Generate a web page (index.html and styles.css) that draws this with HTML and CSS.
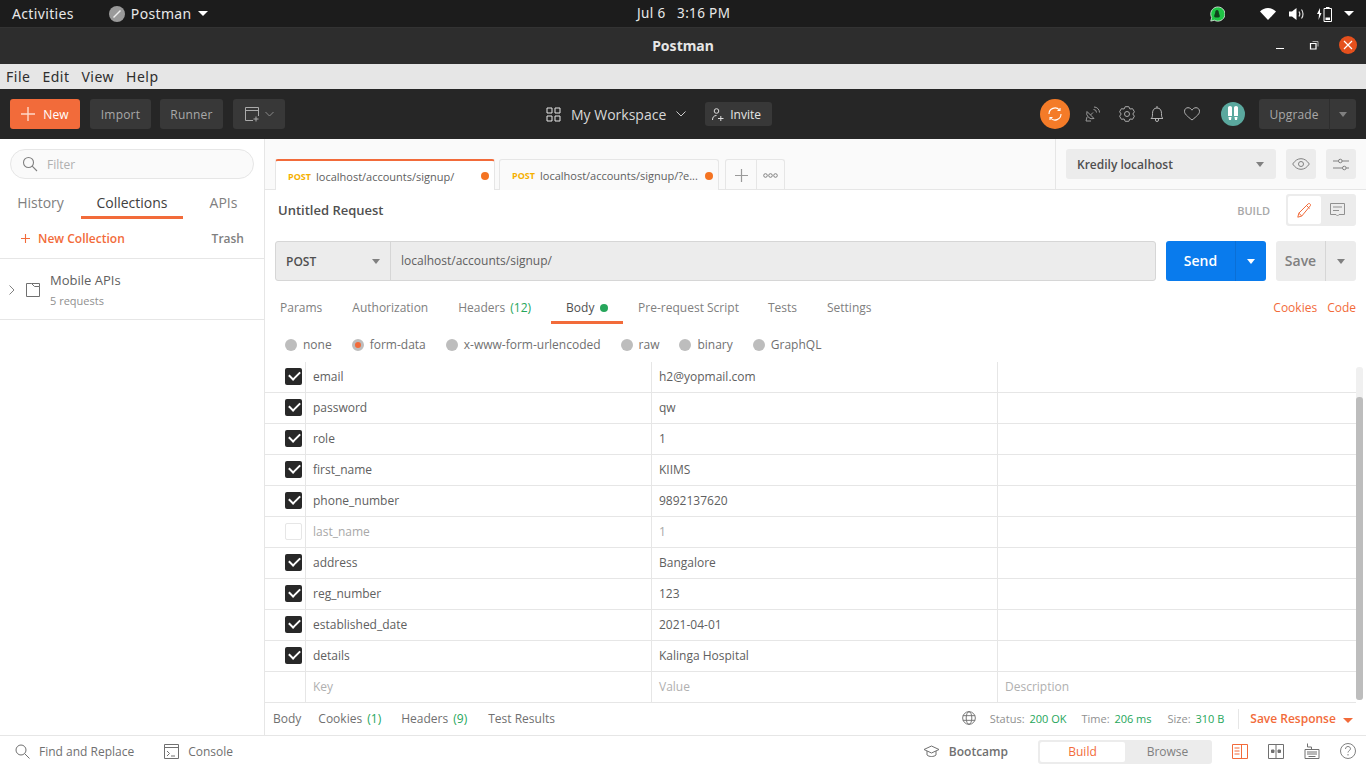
FILE: index.html
```html
<!DOCTYPE html>
<html lang="en">
<head>
    <meta charset="UTF-8">
    <title>Postman</title>
    <link rel="stylesheet" href="styles.css">
</head>
<body>
    <!-- desktop top bar -->
    <div class="topbar">
        <span class="activities">Activities</span>
        <span class="app-menu">
            <svg width="16" height="16" viewBox="0 0 16 16"><circle cx="8" cy="8" r="8" fill="#9a9a9a"/><path d="M4.500 11.500 11.500 4.500" stroke="#eee" stroke-width="1.500"/></svg>
            Postman
            <i class="caret white"></i>
        </span>
        <span class="clock">Jul 6 &nbsp; 3:16 PM</span>
        <span class="tray">
            <svg class="tray-app" width="16" height="16" viewBox="0 0 18 18"><path d="M2 17l1-4a8 8 0 1 1 3 3z" fill="#1fc445" stroke="#fff" stroke-width=".8"/><path d="M9 4.500c-1.400 0-2 1.200-2 2.500 0 1.300-1.200 3-1.200 4.500 0 1 1 1.500 3.200 1.500s3.200-.5 3.200-1.500c0-1.500-1.200-3.200-1.200-4.500 0-1.300-.6-2.500-2-2.500z" fill="#10401c"/></svg>
            <svg class="tray-wifi" width="16" height="12" viewBox="0 0 16 12"><path d="M0 3.500C2 1.500 5 0 8 0s6 1.500 8 3.500L8 12z" fill="#fff"/></svg>
            <svg class="tray-sound" width="16" height="14" viewBox="0 0 16 14"><path d="M0 4.500h3L7.500 1v12L3 9.500H0z" fill="#fff"/><path d="M10 4.500c1 1.500 1 3.500 0 5M12.500 2.500c2 2.500 2 6.500 0 9" fill="none" stroke="#ddd" stroke-width="1.200"/></svg>
            <svg class="tray-batt" width="16" height="16" viewBox="0 0 16 16"><path d="M3 2 0 8h2v0L1.500 14 4.500 7H3z" fill="#fff"/><path d="M7 2.500h7.500v13H7z" fill="none" stroke="#fff"/><path d="M9 1h3.500v1.500H9z" fill="#fff"/><path d="M8.500 11.500h4.500v2.500H8.500z" fill="#fff"/></svg>
            <i class="caret white"></i>
        </span>
    </div>

    <!-- window title -->
    <div class="titlebar">
        <span class="title">Postman</span>
        <span class="win-btns">
            <svg width="10" height="10" viewBox="0 0 10 10"><path d="M1 8.500h8" stroke="#fff"/></svg>
            <svg width="10" height="10" viewBox="0 0 10 10"><path d="M1.500 3.500h5.500v5.500H1.500z" fill="none" stroke="#fff" stroke-width="1.200"/><path d="M3.500 1.500h5.500v5" fill="none" stroke="#aaa"/></svg>
            <span class="win-close"><svg width="10" height="10" viewBox="0 0 10 10"><path d="M1 1l8 8M9 1l-8 8" stroke="#fff" stroke-width="1.200"/></svg></span>
        </span>
    </div>

    <div class="menubar">
        <span>File</span><span>Edit</span><span>View</span><span>Help</span>
    </div>

    <!-- main toolbar -->
    <div class="toolbar">
        <div class="tool-left">
            <button class="btn-new"><svg width="14" height="14" viewBox="0 0 14 14"><path d="M7 0v14M0 7h14" stroke="#ffd9c9" stroke-width="1.400"/></svg>New</button>
            <button class="btn-dark btn-import">Import</button>
            <button class="btn-dark btn-runner">Runner</button>
            <button class="btn-dark btn-window">
                <svg width="16" height="16" viewBox="0 0 16 16" fill="none" stroke="#aaa"><path d="M9 14.500H1.500v-13h13V10M1.500 4.500h13M12 10.500v5M9.500 13h5"/></svg>
                <svg width="9" height="6" viewBox="0 0 9 6" fill="none" stroke="#888"><path d="M.5 1l4 4 4-4"/></svg>
            </button>
        </div>
        <div class="tool-center">
            <span class="workspace">
                <svg width="15" height="15" viewBox="0 0 15 15" fill="none" stroke="#e6e6e6"><path d="M1 1h5v5H1zM9 1h5v5H9zM1 9h5v5H1zM9 9h5v5H9z"/></svg>
                My Workspace
                <svg width="10" height="6" viewBox="0 0 10 6" fill="none" stroke="#ccc"><path d="M.5 .5 5 5 9.500 .5"/></svg>
            </span>
            <button class="btn-invite">
                <svg width="12" height="13" viewBox="0 0 12 13" fill="none" stroke="#ddd"><circle cx="4.500" cy="3" r="2.300"/><path d="M.5 12c0-3 1.500-4.500 4-4.500M6 10.500h5.500M8.800 8v5"/></svg>
                Invite
            </button>
        </div>
        <div class="tool-right">
            <span class="sync"><svg width="16" height="14" viewBox="0 0 16 14" fill="none" stroke="#fff" stroke-width="1.100"><path d="M2 7a6 6 0 0 1 10.500-4M14 7a6 6 0 0 1-10.500 4"/><path d="M10.500 3.500h2.500V1M5.500 10.500H3V13" /></svg></span>
            <svg class="ic-sat" width="16" height="16" viewBox="0 0 16 16" fill="none" stroke="#9a9a9a"><path d="M3 5.500a5.500 5.500 0 0 0 7 7L3 5.500zM6.500 9 9 6.500M9.500 3.500a3 3 0 0 1 3 3M10 1a5.500 5.500 0 0 1 5.500 5.500M3 11l-1 4h5"/></svg>
            <svg class="ic-gear" width="16" height="16" viewBox="0 0 16 16" fill="none" stroke="#aaa" stroke-linejoin="round"><circle cx="8" cy="8" r="2.500"/><path d="M6.200 .7h3.600l1.100 2.300 2.700-.3 1.800 3.100L13.800 8l1.600 2.200-1.800 3.100-2.700-.3-1.100 2.300H6.200L5.100 13l-2.700.3L.6 10.200 2.200 8 .6 5.800l1.800-3.100 2.700.3z"/></svg>
            <svg class="ic-bell" width="14" height="16" viewBox="0 0 14 16" fill="none" stroke="#b5b5b5"><path d="M1 12.500c1.500-1 1.500-2.500 1.500-5C2.500 4 4 2 7 2s4.500 2 4.500 5.500c0 2.500 0 4 1.500 5zM5.500 12.500v1.500a1.500 1.500 0 0 0 3 0v-1.500M7 0v2"/></svg>
            <svg class="ic-heart" width="16" height="14" viewBox="0 0 16 14" fill="none" stroke="#b5b5b5"><path d="M8 13C3 9 .5 7 .5 4.300 .5 2 2.200 .7 4 .7 5.800 .7 7 1.700 8 3.200 9 1.700 10.200 .7 12 .7c1.800 0 3.500 1.300 3.500 3.600C15.500 7 13 9 8 13z"/></svg>
            <span class="avatar"><svg width="12" height="16" viewBox="0 0 12 16" fill="#fff"><path d="M1 1.500Q1 0 3 0t2 1.500V10H1zM7 1.500Q7 0 9 0t2 1.500V10H7zM1.500 11H4.500L4 14H2zM7.500 11H10.500L10 14H8z"/></svg></span>
            <span class="upgrade"><span class="up-label">Upgrade</span><span class="up-arrow"><i class="caret gray"></i></span></span>
        </div>
    </div>

    <div class="app">
        <aside class="sidebar">
            <div class="filter-wrap">
                <div class="filter">
                    <svg width="16" height="16" viewBox="0 0 16 16" fill="none" stroke="#808080" stroke-width="1.100"><circle cx="6.500" cy="6.500" r="5"/><path d="M10.200 10.200 15 15"/></svg>
                    <span>Filter</span>
                </div>
            </div>
            <div class="side-tabs">
                <span class="side-tab t-hist">History</span>
                <span class="side-tab t-coll active">Collections</span>
                <span class="side-tab t-apis">APIs</span>
            </div>
            <div class="side-actions">
                <span class="new-coll"><svg width="9" height="9" viewBox="0 0 9 9"><path d="M4.500 0v9M0 4.500h9" stroke="#f26b3a" stroke-width="1.100"/></svg>New Collection</span>
                <span class="trash">Trash</span>
            </div>
            <div class="coll-row">
                <svg class="chev" width="6" height="10" viewBox="0 0 6 10" fill="none" stroke="#808080"><path d="M.5 .5 5 5 .5 9.500"/></svg>
                <svg class="folder" width="14" height="14" viewBox="0 0 14 14" fill="none" stroke="#707070"><path d="M.5 .5h5l3 3h5v10H.5zM5.500 .5h8v3"/></svg>
                <div>
                    <div class="coll-name">Mobile APIs</div>
                    <div class="coll-count">5 requests</div>
                </div>
            </div>
        </aside>

        <main class="content">
            <div class="tabbar">
                <div class="tabs">
                    <div class="tab active"><span class="method">POST</span><span class="tab-url">localhost/accounts/signup/</span><i class="dot"></i></div>
                    <div class="tab"><span class="method">POST</span><span class="tab-url">localhost/accounts/signup/?e...</span><i class="dot"></i></div>
                    <div class="tab-tools">
                        <span class="tab-plus"><svg width="13" height="13" viewBox="0 0 13 13"><path d="M6.500 0v13M0 6.500h13" stroke="#9a9a9a" stroke-width="1.200"/></svg></span>
                        <span class="tab-more"><svg width="15" height="5" viewBox="0 0 15 5" fill="none" stroke="#808080"><circle cx="2.500" cy="2.500" r="1.800"/><circle cx="7.500" cy="2.500" r="1.800"/><circle cx="12.500" cy="2.500" r="1.800"/></svg></span>
                    </div>
                </div>
                <div class="env">
                    <div class="env-select"><span>Kredily localhost</span><i class="caret gray"></i></div>
                    <span class="env-btn"><svg width="18" height="12" viewBox="0 0 18 12" fill="none" stroke="#808080"><path d="M.7 6C3 2.500 5.800 .7 9 .7s6 1.800 8.300 5.300C15 9.500 12.200 11.300 9 11.300S3 9.500 .7 6z"/><circle cx="9" cy="6" r="2.500"/></svg></span>
                    <span class="env-btn"><svg width="16" height="13" viewBox="0 0 16 13" fill="none" stroke="#808080"><path d="M0 3h5.500M9 3h7M0 10h9.500M13 10h3"/><circle cx="7.300" cy="3" r="1.800"/><circle cx="11.300" cy="10" r="1.800"/></svg></span>
                </div>
            </div>

            <div class="req-head">
                <span class="req-title">Untitled Request</span>
                <span class="build-label">BUILD</span>
                <div class="mode-toggle">
                    <span class="mode on"><svg width="15" height="15" viewBox="0 0 15 15" fill="none" stroke="#f26b3a"><path d="M.8 14.200l1-4L11 1c.7-.7 1.500-.7 2.100 0s.7 1.400 0 2L4.800 13zM9.500 2.500l3 3M1.800 10.200l3 2.800"/></svg></span>
                    <span class="mode"><svg width="15" height="15" viewBox="0 0 15 15" fill="none" stroke="#909090"><path d="M.5 .5h14v11H9L7.500 13 6 11.500H.5zM3 4h9M3 7.500h6"/></svg></span>
                </div>
            </div>

            <div class="url-row">
                <div class="url-box">
                    <div class="url-method"><span>POST</span><i class="caret gray"></i></div>
                    <div class="url-input">localhost/accounts/signup/</div>
                </div>
                <div class="send"><span class="send-label">Send</span><span class="send-arrow"><i class="caret white"></i></span></div>
                <div class="save"><span class="save-label">Save</span><span class="save-arrow"><i class="caret gray"></i></span></div>
            </div>

            <div class="req-tabs">
                <span class="req-tab">Params</span>
                <span class="req-tab">Authorization</span>
                <span class="req-tab rt-headers">Headers <em>(12)</em></span>
                <span class="req-tab active">Body <i class="green-dot"></i></span>
                <span class="req-tab rt-pre">Pre-request Script</span>
                <span class="req-tab">Tests</span>
                <span class="req-tab">Settings</span>
                <span class="req-links"><span>Cookies</span><span>Code</span></span>
            </div>

            <div class="body-types">
                <span class="radio"><i></i>none</span>
                <span class="radio on"><i></i>form-data</span>
                <span class="radio"><i></i>x-www-form-urlencoded</span>
                <span class="radio"><i></i>raw</span>
                <span class="radio"><i></i>binary</span>
                <span class="radio"><i></i>GraphQL</span>
            </div>

            <div class="table-wrap">
                <div class="kv-table">
                    <div class="kv-row"><span class="c-check"><i class="check"></i></span><span>email</span><span>h2@yopmail.com</span><span></span></div>
                    <div class="kv-row"><span class="c-check"><i class="check"></i></span><span>password</span><span>qw</span><span></span></div>
                    <div class="kv-row"><span class="c-check"><i class="check"></i></span><span>role</span><span>1</span><span></span></div>
                    <div class="kv-row"><span class="c-check"><i class="check"></i></span><span>first_name</span><span>KIIMS</span><span></span></div>
                    <div class="kv-row"><span class="c-check"><i class="check"></i></span><span>phone_number</span><span>9892137620</span><span></span></div>
                    <div class="kv-row off"><span class="c-check"><i class="check empty"></i></span><span>last_name</span><span>1</span><span></span></div>
                    <div class="kv-row"><span class="c-check"><i class="check"></i></span><span>address</span><span>Bangalore</span><span></span></div>
                    <div class="kv-row"><span class="c-check"><i class="check"></i></span><span>reg_number</span><span>123</span><span></span></div>
                    <div class="kv-row"><span class="c-check"><i class="check"></i></span><span>established_date</span><span>2021-04-01</span><span></span></div>
                    <div class="kv-row"><span class="c-check"><i class="check"></i></span><span>details</span><span>Kalinga Hospital</span><span></span></div>
                    <div class="kv-row ghost"><span class="c-check"></span><span>Key</span><span>Value</span><span>Description</span></div>
                </div>
                <div class="scroll-track"><div class="scroll-thumb"></div></div>
            </div>

            <div class="res-bar">
                <span class="res-tab rs-body">Body</span>
                <span class="res-tab">Cookies <em>(1)</em></span>
                <span class="res-tab">Headers <em>(9)</em></span>
                <span class="res-tab rs-test">Test Results</span>
                <span class="res-meta">
                    <svg width="14" height="14" viewBox="0 0 15 15" fill="none" stroke="#707070"><circle cx="7.500" cy="7.500" r="6.800"/><ellipse cx="7.500" cy="7.500" rx="3" ry="6.800"/><path d="M1 5h13M1 10h13"/></svg>
                    <span class="stat s-status">Status: <b>200 OK</b></span>
                    <span class="stat s-time">Time: <b>206 ms</b></span>
                    <span class="stat s-size">Size: <b>310 B</b></span>
                    <span class="save-res">Save Response <i class="caret orange"></i></span>
                </span>
            </div>
        </main>
    </div>

    <footer class="statusbar">
        <span class="st-item st-find"><svg width="15" height="15" viewBox="0 0 15 15" fill="none" stroke="#707070"><circle cx="6" cy="6" r="5"/><path d="M9.700 9.700 14.500 14.500"/></svg>Find and Replace</span>
        <span class="st-item st-console"><svg width="15" height="15" viewBox="0 0 15 15" fill="none" stroke="#707070"><path d="M.5 .5h14v14H.5zM.5 3.500h14M3 7l2.500 2.500L3 12M7 12h4"/></svg>Console</span>
        <span class="st-item st-boot"><svg width="17" height="13" viewBox="0 0 17 13" fill="none" stroke="#707070"><path d="M8.500 1 16 4.500 8.500 8 1 4.500zM4 6v4c2 2 7 2 9 0V6"/></svg>Bootcamp</span>
        <div class="bb-toggle"><span class="bb on">Build</span><span class="bb">Browse</span></div>
        <span class="st-icons">
            <svg width="16" height="15" viewBox="0 0 16 15" fill="none" stroke="#f26b3a"><path d="M.5 .5h15v14H.5zM9.500 .5v14M2.500 4h5M2.500 7h5M2.500 10h5"/></svg>
            <svg width="16" height="15" viewBox="0 0 16 15" fill="none" stroke="#707070"><path d="M.5 .5h15v14H.5zM8 .5v14"/><path d="M3.500 6h2.500v2.500H3.500zM10 6h2.500v2.500H10z" fill="#707070"/></svg>
            <svg width="16" height="16" viewBox="0 0 15 16" fill="none" stroke="#707070"><path d="M.5 6.500h14v9H.5zM3 .5V4h4v2.500M2.500 9h10M2.500 11h10M4 13.500h7"/></svg>
            <svg width="16" height="16" viewBox="0 0 16 16" fill="none" stroke="#808080"><circle cx="8" cy="8" r="7.500"/><path d="M5.500 6c0-1.500 1-2.500 2.500-2.500s2.500 1 2.500 2.300c0 1.700-2.500 2-2.500 3.700M8 11v1.500"/></svg>
        </span>
    </footer>
</body>
</html>
```

FILE: styles.css
```css
* {
    box-sizing: border-box;
}

html, body {
    margin: 0;
    height: 768px;
    overflow: hidden;
}

body {
    font-family: 'Open Sans', 'Noto Sans', sans-serif;
    font-size: 12px;
    color: #505050;
    background: #fff;
    display: flex;
    flex-direction: column;
}

button {
    font-family: inherit;
    border: none;
}

em {
    font-style: normal;
    color: #26a65b;
    margin-left: 2px;
}

.caret {
    display: inline-block;
    width: 0;
    height: 0;
    border-left: 4px solid transparent;
    border-right: 4px solid transparent;
    border-top: 5px solid #808080;
}

.caret.white { border-top-color: #fff; }
.caret.orange { border-top-color: #f26b3a; border-left-width: 5px; border-right-width: 5px; }

/* top bar */
.topbar {
    height: 27px;
    flex: none;
    background: #1c1c1c;
    color: #e8e8e8;
    font-family: 'Noto Sans', sans-serif;
    font-size: 14px;
    letter-spacing: .35px;
    display: flex;
    align-items: center;
    padding-left: 12px;
    position: relative;
}

.topbar .caret {
    border-left-width: 5px;
    border-right-width: 5px;
}

.app-menu {
    margin-left: 35px;
    display: flex;
    align-items: center;
    gap: 6px;
}

.clock {
    position: absolute;
    left: 637px;
    top: 4px;
    font-size: 13.5px;
}

.tray {
    margin-left: auto;
    display: flex;
    align-items: center;
    padding-right: 12px;
}

.tray-app { margin-right: 35px; }
.tray-wifi { margin-right: 13px; }
.tray-sound { margin-right: 12px; }
.tray-batt { margin-right: 11px; }

/* window title */
.titlebar {
    height: 37px;
    flex: none;
    background: #2d2d2d;
    border-top: 1px solid #333;
    position: relative;
    text-align: center;
    color: #e6e6e6;
    font-family: 'Noto Sans', sans-serif;
    font-weight: 700;
    font-size: 14px;
    line-height: 36px;
}

.win-btns {
    position: absolute;
    right: 9px;
    top: 8px;
    display: flex;
    align-items: center;
    gap: 24px;
}

.win-close {
    width: 18px;
    height: 18px;
    margin-left: -4px;
    border-radius: 50%;
    background: #e5501d;
    display: flex;
    align-items: center;
    justify-content: center;
}

.menubar {
    height: 25px;
    flex: none;
    background: #e6e6e6;
    color: #2e2e2e;
    font-family: 'Noto Sans', sans-serif;
    font-size: 14px;
    letter-spacing: .5px;
    display: flex;
    align-items: center;
    gap: 12px;
    padding-left: 6px;
}

/* toolbar */
.toolbar {
    height: 50px;
    flex: none;
    background: #262626;
    display: flex;
    align-items: center;
    padding: 0 10px;
    position: relative;
}

.tool-left {
    display: flex;
    gap: 10px;
}

.tool-left button {
    height: 30px;
    border-radius: 3px;
    font-size: 12px;
    letter-spacing: .2px;
    display: flex;
    align-items: center;
    justify-content: center;
}

.btn-new {
    width: 70px;
    background: #f26b3a;
    color: #fff;
    gap: 8px;
}

.btn-dark {
    padding: 0;
    background: #383838;
    color: #a8a8a8;
}

.btn-import { width: 61px; margin-right: -1px; }
.btn-runner { width: 63px; }

.btn-window {
    width: 52px;
    gap: 5px;
}

.tool-center {
    position: absolute;
    left: 546px;
    top: 13px;
    display: flex;
    align-items: center;
    gap: 19px;
}

.workspace {
    display: flex;
    align-items: center;
    gap: 10px;
    color: #d8d8d8;
    font-size: 14px;
}

.btn-invite {
    width: 67px;
    height: 24px;
    border-radius: 3px;
    background: #383838;
    color: #e6e6e6;
    font-size: 12px;
    font-weight: 500;
    display: flex;
    align-items: center;
    gap: 6px;
    padding: 0 0 0 7px;
}

.tool-right {
    margin-left: auto;
    display: flex;
    align-items: center;
}

.sync {
    width: 30px;
    height: 30px;
    border-radius: 50%;
    background: #f47b28;
    display: flex;
    align-items: center;
    justify-content: center;
    margin-right: 14px;
}

.ic-sat { margin-right: 19px; }
.ic-gear { margin-right: 15px; }
.ic-bell { margin-right: 20px; }
.ic-heart { margin-right: 21px; }

.avatar {
    width: 24px;
    height: 24px;
    border-radius: 50%;
    background: #5aa89e;
    display: flex;
    align-items: center;
    justify-content: center;
    margin-right: 14px;
}

.upgrade {
    width: 97px;
    height: 30px;
    background: #383838;
    border-radius: 3px;
    color: #a8a8a8;
    display: flex;
    align-items: center;
}

.up-label {
    width: 71px;
    text-align: center;
    border-right: 1px solid #2e2e2e;
    line-height: 30px;
    padding-top: 1px;
    letter-spacing: .1px;
}

.up-arrow {
    flex: 1;
    display: flex;
    justify-content: center;
}

/* main area */
.app {
    flex: 1;
    display: flex;
    min-height: 0;
}

.sidebar {
    width: 265px;
    flex: none;
    border-right: 1px solid #e6e6e6;
}

.filter-wrap {
    padding: 10px 10px 0;
}

.filter {
    height: 30px;
    border: 1px solid #e6e6e6;
    background: #fafafa;
    border-radius: 15px;
    display: flex;
    align-items: center;
    gap: 9px;
    padding-left: 11px;
    color: #b0b0b0;
}

.side-tabs {
    height: 40px;
    margin-top: 9px;
    display: flex;
    font-size: 14px;
    color: #808080;
}

.side-tab {
    height: 40px;
    padding-top: 5px;
    text-align: center;
}

.t-hist { width: 81px; }
.t-coll { width: 102px; color: #505050; }
.t-apis { width: 81px; }

.side-tab.active {
    border-bottom: 3px solid #f26b3a;
    height: 31px;
    padding-top: 5px;
    color: #404040;
}

.side-actions {
    height: 41px;
    display: flex;
    align-items: center;
    justify-content: space-between;
    padding: 0 20px 0 21px;
    border-bottom: 1px solid #e6e6e6;
    margin-top: -10px;
    font-weight: 600;
}

.new-coll {
    color: #f26b3a;
    display: flex;
    align-items: center;
    gap: 8px;
}

.trash {
    color: #808080;
}

.coll-row {
    height: 61px;
    border-bottom: 1px solid #e6e6e6;
    display: flex;
    align-items: center;
    padding: 1px 0 0 9px;
}

.chev { margin-right: 11px; }
.folder { margin-right: 10px; }

.coll-name {
    font-size: 13px;
    color: #606060;
    line-height: 18px;
}

.coll-count {
    font-size: 11px;
    color: #909090;
    margin-top: 4px;
}

.content {
    flex: 1;
    min-width: 0;
    display: flex;
    flex-direction: column;
}

.tabbar {
    height: 51px;
    flex: none;
    background: #fafafa;
    border-bottom: 1px solid #e6e6e6;
    display: flex;
    justify-content: space-between;
}

.tabs {
    display: flex;
    align-items: flex-end;
    padding-left: 10px;
    margin-bottom: -1px;
}

.tab {
    width: 220px;
    height: 31px;
    margin-right: 4px;
    background: #fafafa;
    border: 1px solid #e6e6e6;
    border-bottom: none;
    border-radius: 3px 3px 0 0;
    display: flex;
    align-items: center;
    padding: 1px 5px 0 12px;
    font-size: 11px;
    color: #606060;
    white-space: nowrap;
}

.tab.active {
    background: #fff;
    border-top: 2px solid #f26b3a;
}

.method {
    font-size: 9px;
    font-weight: 700;
    color: #f5b000;
    margin-right: 5px;
}

.dot {
    width: 8px;
    height: 8px;
    border-radius: 50%;
    background: #f47321;
    margin-left: auto;
}

.tab-tools {
    margin-left: 2px;
    height: 31px;
    display: flex;
    border: 1px solid #e6e6e6;
    border-bottom: none;
    border-radius: 3px 3px 0 0;
}

.tab-plus, .tab-more {
    width: 30px;
    display: flex;
    align-items: center;
    justify-content: center;
}

.tab-more {
    border-left: 1px solid #e6e6e6;
    width: 28px;
}

.env {
    width: 311px;
    border-left: 1px solid #e6e6e6;
    display: flex;
    padding: 10px 10px 0;
    gap: 10px;
}

.env-select {
    width: 210px;
    height: 30px;
    background: #ececec;
    border-radius: 3px;
    display: flex;
    align-items: center;
    justify-content: space-between;
    padding: 0 12px 0 11px;
    color: #505050;
    font-weight: 600;
}

.env-btn {
    width: 30px;
    height: 30px;
    background: #ececec;
    border-radius: 3px;
    display: flex;
    align-items: center;
    justify-content: center;
}

.req-head {
    height: 51px;
    flex: none;
    display: flex;
    align-items: flex-start;
    padding: 0 10px 0 13px;
}

.req-title {
    font-size: 13px;
    font-weight: 600;
    color: #505050;
    line-height: 40px;
}

.build-label {
    margin-left: auto;
    margin-right: 16px;
    font-size: 11px;
    font-weight: 600;
    color: #a8a8a8;
    line-height: 40px;
    margin-top: 1px;
}

.mode-toggle {
    width: 70px;
    height: 32px;
    background: #ececec;
    border-radius: 3px;
    padding: 2px;
    display: flex;
    margin-top: 4px;
}

.mode {
    flex: 1;
    display: flex;
    align-items: center;
    justify-content: center;
    border-radius: 2px;
}

.mode.on {
    background: #fff;
}

.url-row {
    height: 40px;
    flex: none;
    margin: 0 10px;
    display: flex;
}

.url-box {
    flex: 1;
    display: flex;
    border: 1px solid #d6d6d6;
    border-radius: 3px;
    background: #ececec;
}

.url-method {
    width: 115px;
    flex: none;
    border-right: 1px solid #d6d6d6;
    display: flex;
    align-items: center;
    justify-content: space-between;
    padding: 0 10px;
    font-weight: 600;
    color: #505050;
}

.url-input {
    flex: 1;
    padding-left: 10px;
    line-height: 38px;
    color: #606060;
}

.send, .save {
    margin-left: 10px;
    border-radius: 3px;
    display: flex;
    font-size: 14px;
    font-weight: 600;
    line-height: 40px;
    text-align: center;
}

.send {
    width: 100px;
    background: #097bed;
    color: #fff;
}

.send-label { width: 69px; }

.send-arrow, .save-arrow {
    flex: 1;
    display: flex;
    align-items: center;
    justify-content: center;
    border-left: 1px solid #0a6fd6;
}

.save {
    width: 80px;
    background: #ececec;
    color: #808080;
}

.save-label { width: 49px; }

.save-arrow {
    border-left-color: #d6d6d6;
}

.req-tabs {
    height: 33px;
    flex: none;
    margin-top: 10px;
    padding-left: 6px;
    padding-right: 10px;
    display: flex;
    color: #808080;
}

.req-tab {
    padding: 0 9px;
    margin-right: 12px;
    line-height: 34px;
    white-space: nowrap;
    height: 33px;
}

.rt-headers { margin-right: 11px; }
.rt-pre { margin-right: 11px; }

.req-tab.active {
    border-bottom: 3px solid #f26b3a;
    color: #505050;
    width: 72px;
    margin-right: 6px;
    padding-left: 15px;
}

.green-dot {
    display: inline-block;
    width: 8px;
    height: 8px;
    border-radius: 50%;
    background: #26a65b;
    margin-left: 2px;
}

.req-links {
    margin-left: auto;
    line-height: 34px;
    color: #f26b3a;
    display: flex;
    gap: 10px;
}

.body-types {
    height: 38px;
    flex: none;
    padding: 4px 0 1px 20px;
    display: flex;
    align-items: center;
    gap: 20px;
    color: #707070;
}

.radio {
    display: flex;
    align-items: center;
    gap: 6px;
}

.radio i {
    width: 12px;
    height: 12px;
    border-radius: 50%;
    background: #bdbdbd;
}

.radio.on i {
    background: #f26b3a;
    border: 3px solid #bdbdbd;
}

.table-wrap {
    flex: 1;
    min-height: 0;
    display: flex;
}

.kv-table {
    width: 1091px;
}

.kv-row {
    height: 31px;
    display: grid;
    grid-template-columns: 41px 346px 346px 358px;
    border-bottom: 1px solid #e6e6e6;
    line-height: 30px;
    color: #606060;
}

.kv-row > span {
    border-right: 1px solid #e6e6e6;
    padding-left: 7px;
}

.kv-row > span:last-child {
    border-right: none;
}

.kv-row.off { color: #a8a8a8; }
.kv-row.ghost { color: #b0b0b0; }

.kv-row > .c-check {
    padding: 6px 0 0 20px;
}

.check {
    display: block;
    width: 17px;
    height: 17px;
    border-radius: 2px;
    background: #282828;
    position: relative;
}

.check::after {
    content: "";
    position: absolute;
    left: 4px;
    top: 3px;
    width: 9px;
    height: 5px;
    border-left: 2px solid #fff;
    border-bottom: 2px solid #fff;
    transform: rotate(-45deg);
}

.check.empty {
    background: #fff;
    border: 1px solid #e6e6e6;
}

.check.empty::after {
    display: none;
}

.scroll-track {
    width: 7px;
    margin: 5px 0 3px;
    background: #f0f0f0;
    border-radius: 3px;
}

.scroll-thumb {
    width: 7px;
    background: #bdbdbd;
    border-radius: 3px;
    margin-top: 30px;
    height: 303px;
}

.res-bar {
    height: 32px;
    flex: none;
    display: flex;
    align-items: center;
    padding: 0 13px 2px 8px;
    color: #707070;
    gap: 20px;
}

.rs-body { margin-right: -3px; }
.rs-test { margin-left: 1px; }

.res-meta {
    margin-left: auto;
    display: flex;
    align-items: center;
    font-size: 11px;
    color: #909090;
}

.stat {
    margin-left: 14px;
}

.s-time { margin-left: 15px; }
.s-size { margin-left: 16px; }

.stat b {
    font-weight: 400;
    color: #26a65b;
    margin-left: 2px;
}

.save-res {
    margin: 2px 0 0 14px;
    padding-left: 11px;
    border-left: 1px solid #e6e6e6;
    color: #f26b3a;
    font-size: 12px;
    font-weight: 600;
    line-height: 20px;
}

.save-res .caret {
    margin-left: 4px;
}

/* bottom bar */
.statusbar {
    height: 33px;
    flex: none;
    border-top: 1px solid #e6e6e6;
    display: flex;
    align-items: center;
    padding: 0 0 2px 15px;
    color: #707070;
}

.st-item {
    display: flex;
    align-items: center;
    gap: 9px;
}

.st-find { margin-right: 30px; }
.st-console { margin-right: auto; }
.st-boot { margin-right: 30px; font-weight: 600; }

.bb-toggle {
    width: 174px;
    height: 24px;
    background: #ececec;
    border-radius: 3px;
    padding: 2px;
    display: flex;
    margin: 2px 20px 0 0;
}

.bb {
    flex: 1;
    text-align: center;
    line-height: 19px;
    color: #808080;
}

.bb.on {
    background: #fff;
    color: #f26b3a;
    border-radius: 2px;
}

.st-icons {
    display: flex;
    align-items: center;
    gap: 20px;
    padding-right: 10px;
}
```
